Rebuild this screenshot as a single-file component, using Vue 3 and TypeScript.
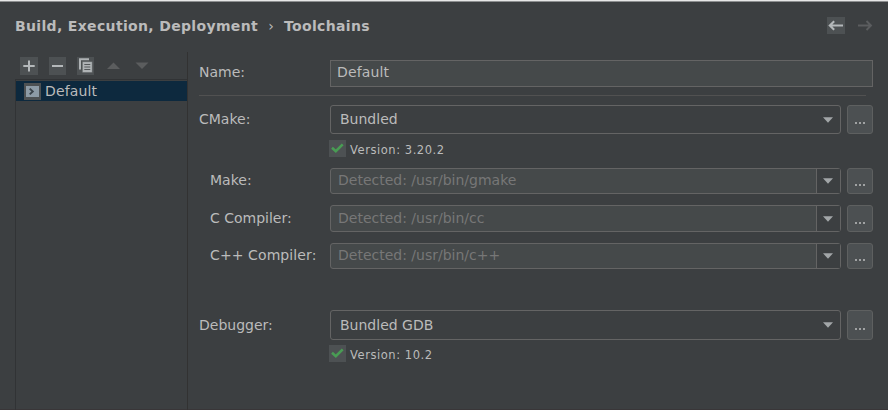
<script setup lang="ts">
interface Row {
  id: string
  label: string
  value: string
  editable: boolean
  version?: string
}

const rows: Row[] = [
  { id: 'cmake', label: 'CMake:', value: 'Bundled', editable: false, version: 'Version: 3.20.2' },
  { id: 'make', label: 'Make:', value: 'Detected: /usr/bin/gmake', editable: true },
  { id: 'cc', label: 'C Compiler:', value: 'Detected: /usr/bin/cc', editable: true },
  { id: 'cxx', label: 'C++ Compiler:', value: 'Detected: /usr/bin/c++', editable: true },
  { id: 'debugger', label: 'Debugger:', value: 'Bundled GDB', editable: false, version: 'Version: 10.2' },
]
</script>

<template>
  <div class="dialog">
    <header class="header">
      <span class="crumb">Build, Execution, Deployment</span>
      <span class="sep">›</span>
      <span class="crumb">Toolchains</span>
      <nav class="history">
        <svg class="tile" width="18" height="17" viewBox="0 0 18 17"><path d="M16 8.5H3M7.2 4.2L2.8 8.5L7.2 12.8" fill="none" stroke="#b4b8ba" stroke-width="2.1" /></svg>
        <svg width="18" height="17" viewBox="0 0 18 17"><path d="M2 8.5H15M10.5 4L15 8.5L10.5 13" fill="none" stroke="#5b5d5f" stroke-width="1.9" /></svg>
      </nav>
    </header>
    <main class="body">
      <aside class="side">
        <div class="tools">
          <svg class="tile" width="18" height="18" viewBox="0 0 18 18"><path d="M9 3.5V14.5M3.3 9H14.7" stroke="#b4b8ba" stroke-width="2" /></svg>
          <svg class="tile" width="17" height="18" viewBox="0 0 17 18"><path d="M3 9H14" stroke="#b4b8ba" stroke-width="2" /></svg>
          <svg class="tile" width="17" height="18" viewBox="0 0 17 18">
            <path d="M3 12.5V2.2H12" fill="none" stroke="#afb3b5" stroke-width="2" />
            <path d="M5.3 4.6H15.3V15.6H5.3Z" fill="#afb3b5" stroke="#4d5153" stroke-width="0.5" />
            <path d="M7.3 7.5H13.3M7.3 10H13.3M7.3 12.5H13.3" stroke="#54585a" stroke-width="1" />
          </svg>
          <svg width="18" height="18" viewBox="0 0 18 18"><path d="M2 12L8.5 5.5L15 12Z" fill="#5b5d5e" /></svg>
          <svg width="18" height="18" viewBox="0 0 18 18"><path d="M1.5 5.5L8 12L14.5 5.5Z" fill="#5b5d5e" /></svg>
        </div>
        <div class="list">
          <div class="item">
            <svg class="tile" width="17" height="17" viewBox="0 0 17 17">
              <rect x="2" y="3" width="13" height="11" fill="#8d9ba6" />
              <path d="M5.7 5.6L8.8 8.5L5.7 11.4" fill="none" stroke="#3b444b" stroke-width="1.9" />
            </svg>
            <span class="item-name">Default</span>
          </div>
        </div>
      </aside>
      <section class="form">
        <div class="row name-row">
          <label class="label">Name:</label>
          <div class="input">Default</div>
        </div>
        <div class="rule"></div>
        <div v-for="row in rows" :key="row.id" class="group" :class="row.id">
          <div class="row">
            <label class="label" :class="{ indented: row.editable }">{{ row.label }}</label>
            <div class="combo" :class="{ editable: row.editable }">
              <span class="value">{{ row.value }}</span>
              <span class="drop"><svg width="10" height="6" viewBox="0 0 10 6"><path d="M0 0.3H10L5 5.8Z" fill="#a2a6a8" /></svg></span>
            </div>
            <button class="more"><i></i><i></i><i></i></button>
          </div>
          <div v-if="row.version" class="status">
            <svg class="tile" width="17" height="17" viewBox="0 0 17 17"><path d="M3 7.8L6.8 11.2L13.7 4.4" fill="none" stroke="#499c54" stroke-width="2.6" /></svg>
            <span class="version">{{ row.version }}</span>
          </div>
        </div>
      </section>
    </main>
  </div>
</template>

<style>
body { background: #3c3f41; }
</style>

<style scoped>
.dialog {
  box-sizing: border-box;
  width: 888px;
  height: 410px;
  overflow: hidden;
  display: flex;
  flex-direction: column;
  background: #3c3f41;
  border-top: 1px solid #e7e7e7;
  box-shadow: inset 0 1px #8d8f90, inset 0 -1px #393638;
  color: #bbbbbb;
  font: 14px/18px "DejaVu Sans", sans-serif;
}
svg { display: block; flex: none; }
.tile { background: #4d5153; }
.header {
  height: 51px;
  box-sizing: border-box;
  padding: 16px 14px 0 15px;
  display: flex;
  align-items: flex-start;
  font-weight: bold;
  white-space: nowrap;
}
.crumb { letter-spacing: 0.34px; }
.sep { width: 26px; text-align: center; font-weight: normal; }
.history { display: flex; gap: 11px; margin-left: auto; }
.body { flex: 1; display: flex; }
.side {
  width: 188px;
  box-sizing: border-box;
  padding: 5px 0 0 15px;
  border-right: 1px solid #323232;
  display: flex;
  flex-direction: column;
}
.tools { display: flex; gap: 11px; height: 22px; padding-left: 5px; }
.list { flex: 1; border: solid #313335; border-width: 1px 0 0 1px; padding-top: 1px; }
.item { height: 20px; display: flex; align-items: center; gap: 4px; padding-left: 8px; background: #0d293e; }
.item-name { letter-spacing: 0.15px; }
.form { flex: 1; padding: 8px 15px 0 11px; }
.row { display: flex; align-items: center; height: 27px; }
.label { width: 131px; padding-bottom: 2px; white-space: nowrap; }
.name-row .label { padding-bottom: 3px; }
.cxx .label { letter-spacing: 0.1px; }
.indented { box-sizing: border-box; padding-left: 11px; }
.input {
  flex: 1;
  height: 27px;
  box-sizing: border-box;
  padding: 2px 6px;
  letter-spacing: 0.15px;
  border: 1px solid #646464;
  background: #45494a;
}
.rule { height: 1px; margin: 8px 7px 9px 0; background: #515151; }
.combo {
  width: 511px;
  height: 100%;
  box-sizing: border-box;
  display: flex;
  align-items: center;
  border: 1px solid #646464;
  border-radius: 3px;
}
.value { flex: 1; padding: 0 0 2px 9px; }
.drop { width: 24px; height: 100%; box-sizing: border-box; padding-right: 1px; display: flex; align-items: center; justify-content: center; }
.editable .value { padding-left: 7px; color: #777777; }
.editable .drop { border-left: 1px solid #646464; background: #3c3f41; }
.combo.editable { background: #45494a; }
.more {
  width: 26px;
  height: 100%;
  margin-left: 6px;
  box-sizing: border-box;
  padding: 0 0 9px;
  display: flex;
  justify-content: center;
  align-items: flex-end;
  gap: 2px;
  border: 1px solid #5e6060;
  border-radius: 3px;
  background: #4c5052;
}
.more i { width: 2px; height: 2px; background: #a0a2a3; }
.cmake .row { height: 29px; }
.cmake { height: 63px; }
.make { height: 37px; }
.make .row, .cxx .row { height: 26px; }
.make .more, .cxx .more { padding-bottom: 7px; }
.cc .more { padding-bottom: 7px; }
.cc { height: 38px; }
.cxx { height: 67px; }
.debugger .row { height: 30px; }
.debugger .label, .debugger .value { padding-bottom: 1px; }
.status { display: flex; align-items: flex-start; gap: 3px; margin: 5px 0 0 130px; padding-top: 1px; line-height: 17px; }
.version { padding: 2px 0 0 1px; font-size: 11.5px; letter-spacing: 0.55px; }
.debugger .status { margin-top: 4px; }
</style>
